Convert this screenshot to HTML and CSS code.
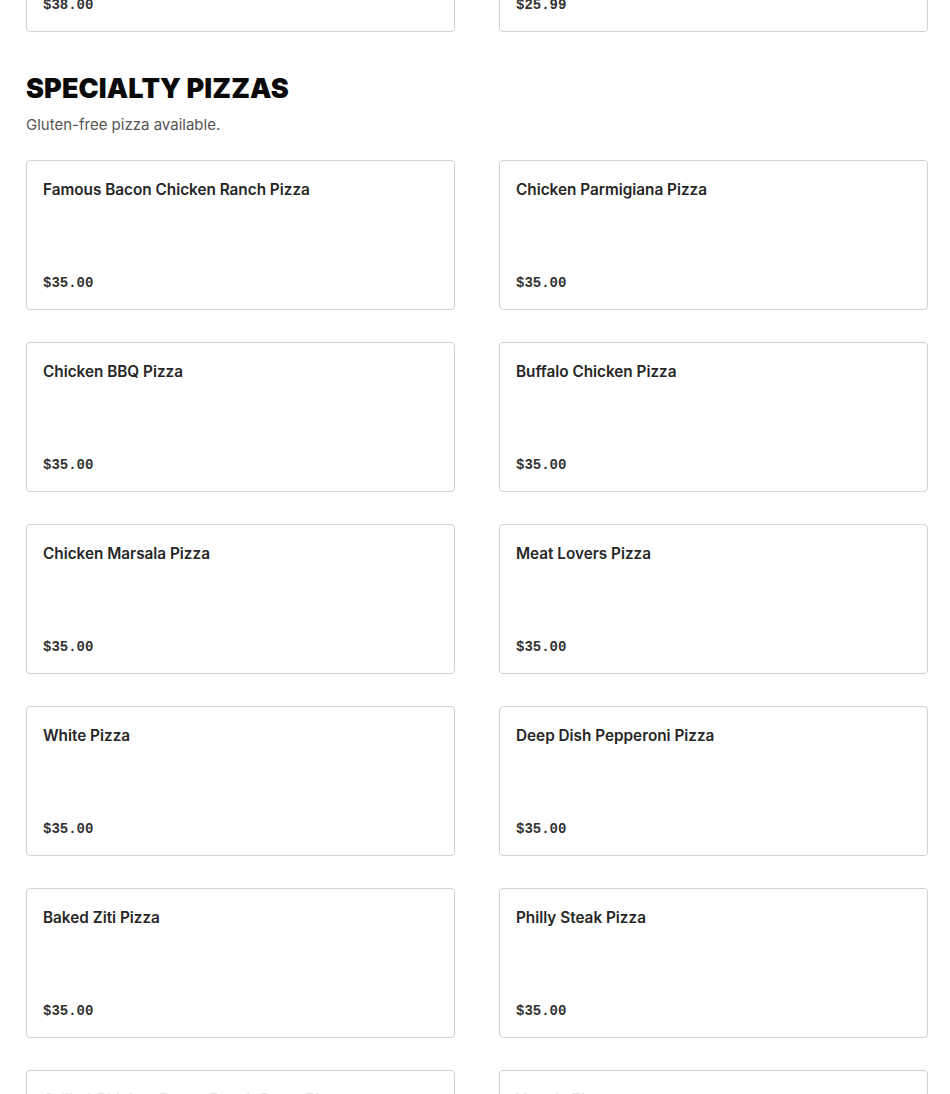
FILE: index.html
```html
<!DOCTYPE html>
<html lang="en">
<head>
<meta charset="utf-8">
<title>Specialty Pizzas</title>
<link rel="stylesheet" href="styles.css">
</head>
<body>
<main class="menu">
  <div class="grid grid-prev">
    <div class="card"><div class="title">Large Cheese Pizza</div><div class="price">$38.00</div></div>
    <div class="card"><div class="title">Medium Cheese Pizza</div><div class="price">$25.99</div></div>
  </div>

  <section class="section">
    <h2 class="heading">SPECIALTY PIZZAS</h2>
    <p class="sub">Gluten-free pizza available.</p>
    <div class="grid">
      <div class="card"><div class="title">Famous Bacon Chicken Ranch Pizza</div><div class="price">$35.00</div></div>
      <div class="card"><div class="title">Chicken Parmigiana Pizza</div><div class="price">$35.00</div></div>
      <div class="card"><div class="title">Chicken BBQ Pizza</div><div class="price">$35.00</div></div>
      <div class="card"><div class="title">Buffalo Chicken Pizza</div><div class="price">$35.00</div></div>
      <div class="card"><div class="title">Chicken Marsala Pizza</div><div class="price">$35.00</div></div>
      <div class="card"><div class="title">Meat Lovers Pizza</div><div class="price">$35.00</div></div>
      <div class="card"><div class="title">White Pizza</div><div class="price">$35.00</div></div>
      <div class="card"><div class="title">Deep Dish Pepperoni Pizza</div><div class="price">$35.00</div></div>
      <div class="card"><div class="title">Baked Ziti Pizza</div><div class="price">$35.00</div></div>
      <div class="card"><div class="title">Philly Steak Pizza</div><div class="price">$35.00</div></div>
      <div class="card card-faded"><div class="title">Grilled Chicken Bacon Ranch Pesto Pizza</div><div class="price">$35.00</div></div>
      <div class="card card-faded"><div class="title">Veggie Pizza</div><div class="price">$35.00</div></div>
    </div>
  </section>
</main>
</body>
</html>
```
FILE: styles.css
```css
* { box-sizing: border-box; }
html, body { margin: 0; padding: 0; background: #fff; }
body { font-family: Inter, "Liberation Sans", sans-serif; color: #222; }

.menu { padding: 0 22px 0 26px; }

.grid {
  display: grid;
  grid-template-columns: 1fr 1fr;
  column-gap: 44px;
  row-gap: 32px;
}
.grid-prev { margin-top: -118px; }

.card {
  height: 150px;
  border: 1px solid #d0d0d0;
  border-radius: 4px;
  padding: 19px 16px 17px;
  display: flex;
  flex-direction: column;
  justify-content: space-between;
  background: #fff;
}
.title {
  font-size: 15.3px;
  font-weight: 600;
  line-height: 20px;
  color: #262626;
}
.price {
  font-family: "Liberation Mono", monospace;
  font-size: 14px;
  font-weight: 700;
  line-height: 18px;
  color: #333;
}
.card-faded .title { color: #e4e4e4; }

.section { padding-top: 41px; }
.heading {
  margin: 0;
  font-family: Inter, "Liberation Sans", sans-serif;
  font-size: 27px;
  font-weight: 900;
  line-height: 32px;
  letter-spacing: 0.1px;
  color: #0a0a0a;
}
.sub {
  margin: 9px 0 24px;
  font-size: 15px;
  line-height: 22px;
  color: #555;
}
```
